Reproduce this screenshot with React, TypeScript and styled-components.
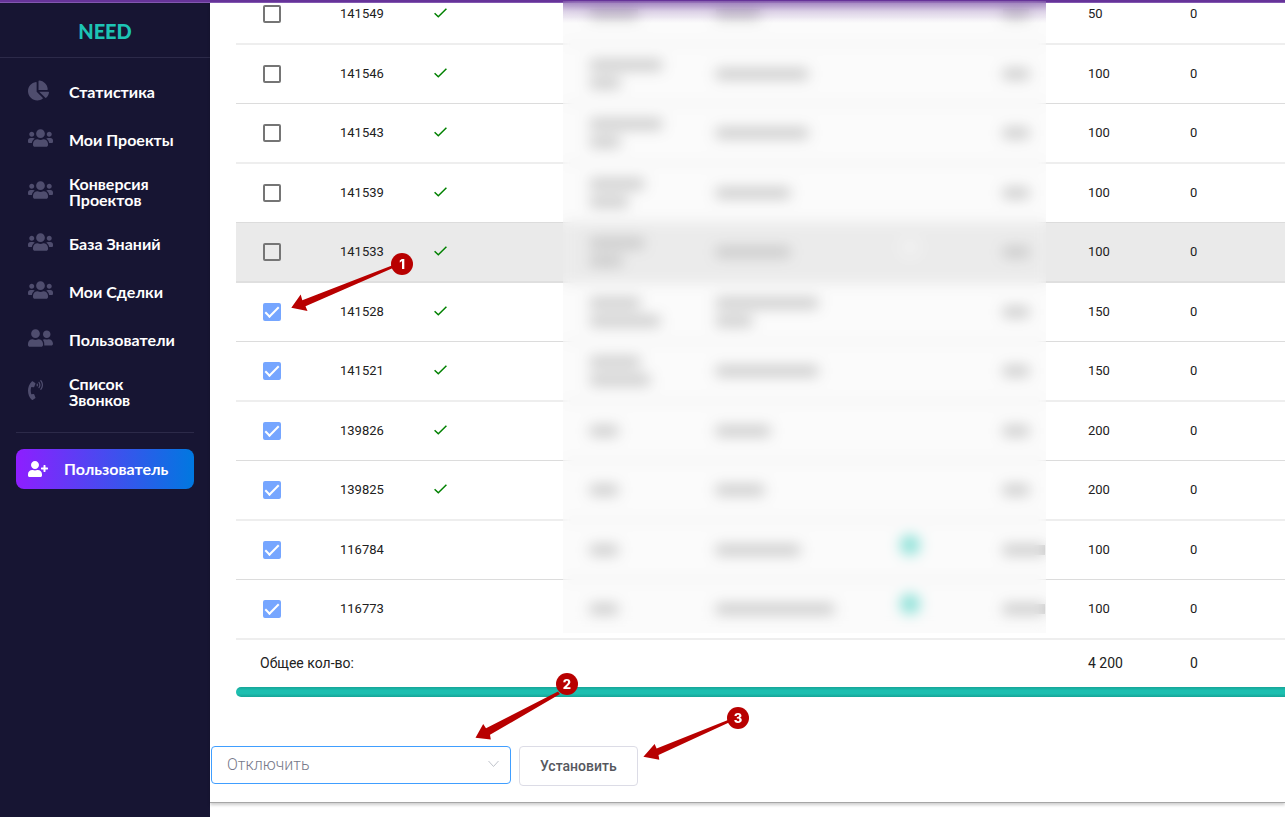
import React from "react";
import styled, { createGlobalStyle } from "styled-components";
import {
  FaChartPie,
  FaPhoneVolume,
  FaUserFriends,
  FaUserPlus,
  FaUsers,
} from "react-icons/fa";
import type { IconType } from "react-icons";

const GlobalStyle = createGlobalStyle`
  *, *::before, *::after { box-sizing: border-box; }
  body {
    margin: 0;
    background: #fff;
    color: #212121;
    font-family: Roboto, "Liberation Sans", sans-serif;
  }
`;

const Page = styled.div`
  display: flex;
  min-height: 100vh;
  position: relative;
  overflow: hidden;
`;

const TopStrip = styled.div`
  position: absolute;
  inset: 0 0 auto 0;
  height: 3px;
  background: #663399;
  border-bottom: 1px solid #8257b0;
  z-index: 1;
`;

const Sidebar = styled.aside`
  flex: 0 0 210px;
  background: #171533;
  font-family: Lato, "Open Sans", sans-serif;
`;

const Brand = styled.a`
  display: flex;
  align-items: center;
  justify-content: center;
  height: 58px;
  padding-top: 4px;
  border-bottom: 1px solid #2c2a49;
  color: #1dc4b4;
  font-size: 20px;
  font-weight: 900;
  line-height: 24px;
  text-decoration: none;
`;

const Nav = styled.nav`
  padding: 10px 0 12px;
`;

const NavLink = styled.a`
  display: flex;
  align-items: center;
  min-height: 48px;
  padding: 12px 28px;
  color: #fff;
  font-size: 16px;
  font-weight: 700;
  line-height: 16px;
  text-decoration: none;
`;

const NavIcon = styled.span<{ $w: number; $h: number }>`
  display: flex;
  align-items: center;
  flex: 0 0 41px;
  height: 24px;
  padding-bottom: 4px;
  color: #4f4d6e;

  & > svg {
    width: ${(p) => p.$w}px;
    height: ${(p) => p.$h}px;
  }
`;

const NavDivider = styled.hr`
  margin: 0 16px 16px;
  border: 0;
  border-top: 1px solid #2c2a49;
`;

const UserButton = styled.button`
  display: flex;
  align-items: center;
  gap: 16px;
  width: 178px;
  height: 40px;
  margin: 0 16px;
  padding: 0 12px;
  border: 0;
  border-radius: 8px;
  background: linear-gradient(90deg, #8e1eff, #0078e0);
  color: #fff;
  font: 700 16px/16px Lato, "Open Sans", sans-serif;
`;

const Main = styled.main`
  flex: 1;
  min-width: 0;
`;

const Card = styled.section`
  display: flow-root;
  position: relative;
  padding-bottom: 16px;
  border-bottom: 1px solid #a6a6a6;
  box-shadow: 0 2px 3px rgba(0, 0, 0, 0.2);
`;

const TableArea = styled.div`
  margin-top: -15px;
  padding-left: 26px;
`;

const Table = styled.table`
  width: 100%;
  table-layout: fixed;
  border-collapse: separate;
  border-spacing: 0;
`;

const Row = styled.tr<{ $hovered?: boolean }>`
  background: ${(p) => (p.$hovered ? "#eaeaea" : "#fff")};
  & > td {
    height: 59px;
    border-bottom: 1px solid #dcdcdc;
  }
  &:nth-child(odd) > td {
    height: 60px;
    border-bottom: 2px solid ${(p) => (p.$hovered ? "#dfdfdf" : "#eee")};
  }
`;

const Cell = styled.td`
  padding: 0 0 0 24px;
  font-size: 13px;
  line-height: 18px;
  vertical-align: middle;
`;

const TotalCell = styled.td`
  height: 47px;
  padding: 0 0 2px 24px;
  font-size: 14px;
  line-height: 20px;
`;

const Tick = styled.input`
  display: grid;
  place-items: center;
  appearance: none;
  width: 18px;
  height: 18px;
  margin: 0 0 0 3px;
  border: 2px solid #757575;
  border-radius: 2px;

  &:checked {
    border-color: #76a6ff;
    background: #76a6ff;
  }
  &:checked::after {
    content: "";
    width: 14px;
    height: 7px;
    margin-bottom: 4px;
    border: solid #fff;
    border-width: 0 0 2px 2px;
    transform: rotate(-45deg);
  }
`;

const CheckSvg = styled.svg`
  display: block;
  width: 13px;
  height: 10px;
  margin-bottom: 2px;
`;

const Smudge = styled.span<{ $w: number }>`
  display: block;
  width: ${(p) => p.$w}px;
  height: 10px;
  margin: 8px 0;
  background: #b8b8b8;
`;

const Dot = styled.span<{ $on: boolean }>`
  display: block;
  width: 20px;
  height: 20px;
  margin: 0 0 10px 6px;
  border-radius: 50%;
  background: ${(p) => (p.$on ? "#62dacd" : "rgba(255, 255, 255, 0.4)")};
`;

const Frost = styled.div`
  position: absolute;
  top: 1px;
  bottom: 169px;
  left: 353px;
  width: 483px;
  z-index: 2;
  background: linear-gradient(rgba(102, 51, 153, 0.6), rgba(102, 51, 153, 0.2) 10px, rgba(102, 51, 153, 0) 22px),
    rgba(240, 240, 240, 0.25);
  backdrop-filter: blur(7px);
`;

const ScrollBar = styled.div`
  height: 10px;
  margin-left: 26px;
  border-radius: 5px 0 0 5px;
  background: linear-gradient(#17a598, #1dbfb0 35%, #1dbfb0 65%, #17a598);
`;

const Actions = styled.form`
  display: flex;
  align-items: flex-start;
  gap: 8px;
  padding: 49px 0 0 1px;
`;

const SelectBox = styled.div`
  position: relative;
  width: 300px;
`;

const Select = styled.select`
  appearance: none;
  display: block;
  width: 100%;
  height: 38px;
  padding: 0 36px 0 15px;
  border: 1px solid #409eff;
  border-radius: 4px;
  background: #fff;
  color: #77798a;
  font: 300 16px/20px Roboto, sans-serif;
`;

const Chevron = styled.svg`
  position: absolute;
  top: 14px;
  right: 12px;
  width: 11px;
  height: 8px;
  pointer-events: none;
`;

const ApplyButton = styled.button`
  height: 40px;
  padding: 0 20px;
  border: 1px solid #dcdce6;
  border-radius: 4px;
  background: #fff;
  color: #56585e;
  font: 500 14px/20px Roboto, sans-serif;
`;

const Marks = styled.svg`
  position: absolute;
  top: 0;
  left: 0;
  width: 800px;
  height: 800px;
  z-index: 3;
  pointer-events: none;
  fill: #b80000;
`;

const MarkText = styled.text`
  fill: #fff;
  font: 800 13px Inter, sans-serif;
  text-anchor: middle;
`;

type NavEntry = { label: string; icon: IconType; width: number; height: number };

const navEntries: NavEntry[] = [
  { label: "Статистика", icon: FaChartPie, width: 21, height: 21 },
  { label: "Мои Проекты", icon: FaUsers, width: 25, height: 20 },
  { label: "Конверсия Проектов", icon: FaUsers, width: 25, height: 20 },
  { label: "База Знаний", icon: FaUsers, width: 25, height: 20 },
  { label: "Мои Сделки", icon: FaUsers, width: 25, height: 20 },
  { label: "Пользователи", icon: FaUserFriends, width: 25, height: 20 },
  { label: "Список Звонков", icon: FaPhoneVolume, width: 15, height: 20 },
];

type RowData = {
  id: string;
  amount: number;
  checked?: boolean;
  valid?: boolean;
  hovered?: boolean;
  dot?: boolean;
  name: number[];
  group: number[];
  tail: number;
};

const rows: RowData[] = [
  { id: "141549", amount: 50, valid: true, name: [48], group: [44], tail: 26 },
  { id: "141546", amount: 100, valid: true, name: [72, 30], group: [92], tail: 26 },
  { id: "141543", amount: 100, valid: true, name: [72, 30], group: [92], tail: 26 },
  { id: "141539", amount: 100, valid: true, name: [54, 38], group: [74], tail: 26 },
  { id: "141533", amount: 100, valid: true, hovered: true, name: [54, 32], group: [74], tail: 26 },
  { id: "141528", amount: 150, valid: true, checked: true, name: [50, 70], group: [102, 36], tail: 26 },
  { id: "141521", amount: 150, valid: true, checked: true, name: [50, 60], group: [102], tail: 26 },
  { id: "139826", amount: 200, valid: true, checked: true, name: [28], group: [54], tail: 26 },
  { id: "139825", amount: 200, valid: true, checked: true, name: [28], group: [48], tail: 26 },
  { id: "116784", amount: 100, checked: true, dot: true, name: [28], group: [84], tail: 42 },
  { id: "116773", amount: 100, checked: true, dot: true, name: [28], group: [118], tail: 42 },
];

const columnWidths = [80, 94, 156, 126, 178, 109, 85, 102];

const arrows = [
  {
    n: 1, x: 402, y: 264,
    points: "291.300,307.700 300.700,294.500 302.300,300.300 392,265.500 393,268 305.500,306.200 307.500,311",
  },
  {
    n: 2, x: 567, y: 684,
    points: "475.500,737.800 483.200,724 486,728.300 558,691.500 560,694 490,734.800 490.800,739.600",
  },
  {
    n: 3, x: 738, y: 718,
    points: "643.400,756.800 654.600,744 656.600,748.500 728,720 729,722.500 658.500,755 659.300,759.700",
  },
];

function ValidMark() {
  return (
    <CheckSvg viewBox="0 0 13 10" role="img" aria-label="Да">
      <path d="M.6 5.2 4.3 8.8 12.4.7" fill="none" stroke="#008000" strokeWidth="1.5" />
    </CheckSvg>
  );
}

export default function App() {
  return (
    <Page>
      <GlobalStyle />
      <TopStrip />
      <Sidebar>
        <Brand href="#">NEED</Brand>
        <Nav>
          {navEntries.map(({ label, icon: Icon, width, height }) => (
            <NavLink href="#" key={label}>
              <NavIcon $w={width} $h={height}><Icon /></NavIcon>
              <span>{label}</span>
            </NavLink>
          ))}
        </Nav>
        <NavDivider />
        <UserButton type="button">
          <FaUserPlus size={20} />
          Пользователь
        </UserButton>
      </Sidebar>
      <Main>
        <Card>
          <TableArea>
            <Table>
              <colgroup>
                {columnWidths.map((w, i) => <col key={i} width={w} />)}
                <col />
              </colgroup>
              <tbody>
                {rows.map((r) => (
                  <Row key={r.id} $hovered={r.hovered}>
                    <Cell>
                      <Tick type="checkbox" aria-label={r.id} defaultChecked={r.checked} />
                    </Cell>
                    <Cell>{r.id}</Cell>
                    <Cell>{r.valid && <ValidMark />}</Cell>
                    <Cell>{r.name.map((w, i) => <Smudge key={i} $w={w} />)}</Cell>
                    <Cell>{r.group.map((w, i) => <Smudge key={i} $w={w} />)}</Cell>
                    <Cell><Dot $on={!!r.dot} /></Cell>
                    <Cell><Smudge $w={r.tail} /></Cell>
                    <Cell>{r.amount}</Cell>
                    <Cell>0</Cell>
                  </Row>
                ))}
              </tbody>
              <tfoot>
                <tr>
                  <TotalCell colSpan={7}>Общее кол-во:</TotalCell>
                  <TotalCell>4 200</TotalCell>
                  <TotalCell>0</TotalCell>
                </tr>
              </tfoot>
            </Table>
          </TableArea>
          <ScrollBar />
          <Actions onSubmit={(e) => e.preventDefault()}>
            <SelectBox>
              <Select aria-label="Действие" defaultValue="off">
                <option value="off">Отключить</option>
              </Select>
              <Chevron viewBox="0 0 11 8">
                <path d="M.5 1 5.5 6.5 10.500 1" fill="none" stroke="#c0c4cc" />
              </Chevron>
            </SelectBox>
            <ApplyButton type="submit">Установить</ApplyButton>
          </Actions>
          <Frost />
        </Card>
      </Main>
      <Marks viewBox="0 0 800 800">
        {arrows.map((a) => (
          <g key={a.n}>
            <polygon points={a.points} />
            <circle cx={a.x} cy={a.y} r="11" />
            <MarkText x={a.x} y={a.y + 5}>{a.n}</MarkText>
          </g>
        ))}
      </Marks>
    </Page>
  );
}
